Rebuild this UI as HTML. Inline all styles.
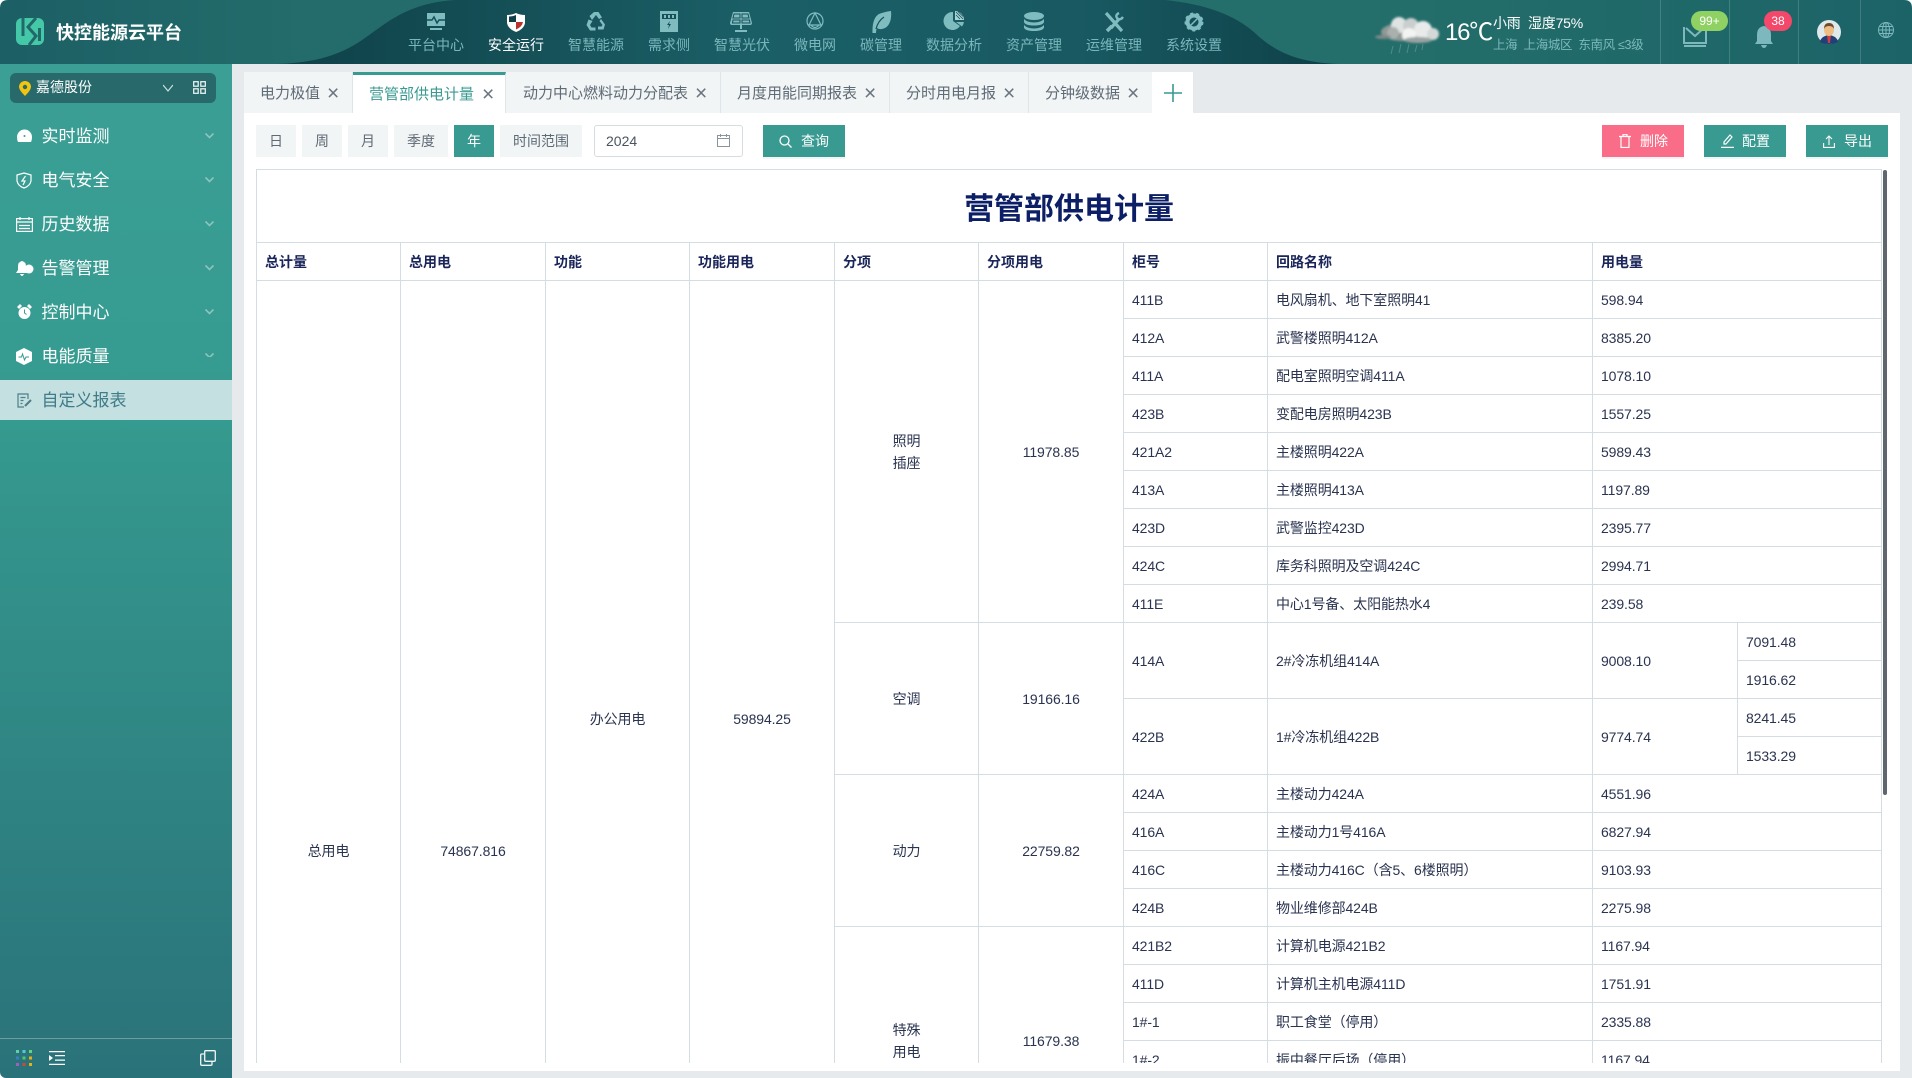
<!DOCTYPE html>
<html lang="zh-CN"><head><meta charset="utf-8"><title>快控能源云平台</title>
<style>
*{box-sizing:border-box}
html,body{margin:0;padding:0;width:1912px;height:1078px;overflow:hidden;background:#fff}
body{font-family:"Liberation Sans","Noto Sans CJK SC",sans-serif;position:relative;color:#2a3350}
.a{position:absolute;white-space:nowrap}
svg{position:absolute;display:block}
.nav{position:absolute;top:36px;width:80px;text-align:center;font-size:14px;line-height:18px;color:#79b7bc}
.m{position:absolute;left:41.500px;font-size:17px;line-height:24px;color:#fff}
.tab{position:absolute;top:72px;height:41px;background:#f2f5f6;border-right:1px solid #dfe5e8;font-size:15px;line-height:43px;color:#5f6b76;white-space:nowrap;padding-left:16px}
.tab i{position:absolute;top:0;width:12px;text-align:center;font-style:normal;font-size:21px;font-weight:400;color:#6b7680}
.btn{position:absolute;top:125px;height:32px;background:#f2f5f6;color:#5e6a75;font-size:14px;line-height:32px;text-align:center}
.act{position:absolute;top:125px;height:32px;width:82px;background:#389a90;color:#fff;font-size:14px;line-height:32px;box-shadow:0 2px 0 #f3f5f6}
.act span{position:absolute;left:38px;top:0}
table{border-collapse:collapse;table-layout:fixed;width:1625px;font-size:14px}
td,th{border:1px solid #d3dde2;padding:0 8px;height:38px;text-align:left;font-weight:400;color:#2a3350;white-space:nowrap;overflow:hidden;letter-spacing:-.1px}
th{font-weight:700;color:#1a2559;letter-spacing:0}
td.c{text-align:center;padding:0}
td.p{vertical-align:top;line-height:22px}
td.t{height:73px;font-size:30px;font-weight:700;color:#0c1f66;text-align:center;line-height:36px;padding-top:8px;letter-spacing:0}
</style></head><body>

<!-- header -->
<svg style="left:0;top:0" width="1912" height="64" viewBox="0 0 1912 64">
<defs>
<linearGradient id="h" x1="0" x2="1"><stop offset="0" stop-color="#1c5f65"/><stop offset=".16" stop-color="#236c6b"/><stop offset=".7" stop-color="#246f6b"/><stop offset="1" stop-color="#1c6367"/></linearGradient>
<linearGradient id="d" x1="0" x2="1"><stop offset="0" stop-color="#0f4048"/><stop offset=".45" stop-color="#1b5f66"/><stop offset=".75" stop-color="#195a62"/><stop offset="1" stop-color="#0e3f47"/></linearGradient>
</defs>
<path d="M8 0H1904Q1912 0 1912 8V64H0V8Q0 0 8 0Z" fill="url(#h)"/>
<path d="M270 64C320 64 345 52 365 38 390 20 410 3 455 0L1165 0C1205 4 1235 15 1255 33 1275 52 1300 64 1345 64Z" fill="url(#d)"/>
<!-- logo -->
<rect x="16" y="18" width="28" height="27" rx="6" fill="#45c8a8"/>
<path d="M23 18V36M36 18L28 27 36 36 29 45M39.500 28V41" fill="none" stroke="#21686a" stroke-width="3"/>
</svg>
<div class="a" style="left:56px;top:20px;font-size:18px;line-height:26px;font-weight:700;color:#fff">快控能源云平台</div>

<!-- nav icons -->
<svg style="left:425px;top:12px" width="22" height="20" viewBox="0 0 22 20"><path d="M2 1h18v13H2z" fill="#7fbcc0"/><path d="M2 8h5l2-3 3 6 2-3h6" fill="none" stroke="#164f57" stroke-width="1.500"/><path d="M5 16h12v2H5z" fill="#7fbcc0"/></svg>
<svg style="left:505px;top:12px" width="22" height="20" viewBox="0 0 22 20"><path d="M11 1q4 2 9 2v8q-1 6-9 9-8-3-9-9V3q5 0 9-2z" fill="#fff"/><path d="M11 3v7H4V4.500q4 0 7-1.500z" fill="#123f47"/><path d="M11 10h7q-1 5-7 7.500z" fill="#b9332e"/></svg>
<svg style="left:585px;top:11px" width="22" height="22" viewBox="0 0 22 22" fill="#7fbcc0"><path d="M7 9L4.500 5 9 1h4.500l3.500 5.500-3 1.500-3-4z"/><path d="M16 8l4 5.500-1.500 5h-5.500v-3h3.500l1-1.500-3-4z"/><path d="M10.500 19.500H5L1.500 14l2-5.500L7.500 10 5 14l1.500 2.500h4z"/></svg>
<svg style="left:659px;top:11px" width="20" height="22" viewBox="0 0 20 22"><rect x="1" y="0" width="18" height="21" fill="#7fbcc0"/><rect x="3" y="3" width="14" height="5" fill="#164f57"/><path d="M5 4h2v3H5zM9 4h2v3H9zM13 4h2v3h-2z" fill="#7fbcc0"/><path d="M11 10l-3 4h2l-1 4 3-5h-2z" fill="#164f57"/></svg>
<svg style="left:729px;top:11px" width="24" height="22" viewBox="0 0 24 22"><path d="M4 1h16l3 11q0 2-2 2H3q-2 0-2-2z" fill="#7fbcc0"/><path d="M5 3h6v4H4zM13 3h6l1 4h-7zM4 9h7v3H3.500zM13 9h7.500l.500 3h-8z" fill="#7fbcc0" stroke="#164f57" stroke-width="1"/><path d="M11 14h2v4h-2zM6 19h12v2H6z" fill="#7fbcc0"/></svg>
<svg style="left:805px;top:11px" width="20" height="20" viewBox="0 0 20 20" fill="none" stroke="#7fbcc0" stroke-width="1.200"><circle cx="10" cy="10" r="8"/><path d="M10 2L4 14h12zM6 14q4 5 8 0"/></svg>
<svg style="left:870px;top:11px" width="22" height="22" viewBox="0 0 22 22"><path d="M21 0C22 9 19 17 12 18Q9 18.500 7 17 6 19 6 22H2.500Q2 7 9 3 14 1 21 0Z" fill="#7fbcc0"/><path d="M6 18Q8 10 14 6" fill="none" stroke="#164f57" stroke-width="1.200"/></svg>
<svg style="left:943px;top:10px" width="22" height="22" viewBox="0 0 22 22"><path d="M10 2v9l7 5a9 9 0 1 1-7-14z" fill="#7fbcc0"/><path d="M12 1a9 9 0 0 1 9 9h-9z" fill="#a9d4d6"/><path d="M13 2l7 7M15 1.500l5 5M13 5l4 4" stroke="#164f57" stroke-width=".8"/><path d="M13 12h8q-.5 2.500-2 4.500z" fill="#7fbcc0"/></svg>
<svg style="left:1023px;top:12px" width="22" height="20" viewBox="0 0 22 20" fill="#7fbcc0"><ellipse cx="11" cy="4" rx="10" ry="4"/><path d="M1 7q3 3.500 10 3.500T21 7v3q-1 3.500-10 3.500T1 10z"/><path d="M1 13q3 3.500 10 3.500T21 13v2.500Q20 19 11 19T1 15.500z"/></svg>
<svg style="left:1103px;top:11px" width="22" height="22" viewBox="0 0 22 22" fill="none" stroke="#7fbcc0" stroke-width="3.200"><path d="M3 2l16 18"/><path d="M8 17l8-9" /><path d="M4 20l5-5" stroke-width="3.600"/><path d="M16 2q-4 2-2 5 3 3 6-1" stroke-width="2.400"/></svg>
<svg style="left:1184px;top:12px" width="20" height="20" viewBox="0 0 20 20"><circle cx="10" cy="10" r="6.500" fill="none" stroke="#7fbcc0" stroke-width="4"/><circle cx="10" cy="10" r="8.500" fill="none" stroke="#7fbcc0" stroke-width="2" stroke-dasharray="3 3"/><path d="M7 13l6-6" stroke="#7fbcc0" stroke-width="1.500"/></svg>

<div class="nav" style="left:396px">平台中心</div>
<div class="nav" style="left:476px;color:#fff">安全运行</div>
<div class="nav" style="left:556px">智慧能源</div>
<div class="nav" style="left:629px">需求侧</div>
<div class="nav" style="left:702px">智慧光伏</div>
<div class="nav" style="left:775px">微电网</div>
<div class="nav" style="left:841px">碳管理</div>
<div class="nav" style="left:914px">数据分析</div>
<div class="nav" style="left:994px">资产管理</div>
<div class="nav" style="left:1074px">运维管理</div>
<div class="nav" style="left:1154px">系统设置</div>

<!-- weather -->
<svg style="left:1373px;top:14px" width="74" height="42" viewBox="0 0 74 42">
<defs><filter id="b"><feGaussianBlur stdDeviation="1"/></filter></defs>
<g filter="url(#b)"><ellipse cx="30" cy="18" rx="22" ry="9" fill="#8f9896"/><circle cx="26" cy="11" r="8" fill="#dfe3e2"/><circle cx="38" cy="12" r="8" fill="#c9cfce"/><circle cx="50" cy="16" r="9" fill="#e8ebea"/><circle cx="60" cy="20" r="6" fill="#d4d9d8"/><circle cx="36" cy="21" r="7" fill="#f2f4f3"/><circle cx="20" cy="19" r="6" fill="#a9b0ae"/><ellipse cx="10" cy="23" rx="8" ry="2" fill="#7f8a88"/><ellipse cx="45" cy="26" rx="14" ry="3" fill="#9aa3a1"/></g>
<path d="M20 32l-2 8M28 30l-2 9M36 30l-2 9M44 31l-2 7M50 30l-1 6" stroke="#4f8a8d" stroke-width="1"/>
</svg>
<div class="a" style="left:1445px;top:18px;font-size:24px;line-height:30px;color:#fff;letter-spacing:-1.200px">16℃</div>
<div class="a" style="left:1493px;top:14px;font-size:14px;line-height:18px;color:#fff;letter-spacing:-.2px">小雨&nbsp;&nbsp;湿度75%</div>
<div class="a" style="left:1493px;top:36px;font-size:12.500px;line-height:18px;color:#7cb8bd;letter-spacing:-.35px">上海&nbsp;&nbsp;上海城区&nbsp;&nbsp;东南风&nbsp;≤3级</div>

<div class="a" style="left:1660px;top:0;width:1px;height:64px;background:rgba(255,255,255,.16)"></div>
<div class="a" style="left:1729px;top:0;width:1px;height:64px;background:rgba(255,255,255,.16)"></div>
<div class="a" style="left:1798px;top:0;width:1px;height:64px;background:rgba(255,255,255,.16)"></div>
<div class="a" style="left:1860px;top:0;width:1px;height:64px;background:rgba(255,255,255,.16)"></div>

<svg style="left:1683px;top:25px" width="24" height="22" viewBox="0 0 24 22" fill="none" stroke="#7cb8bd" stroke-width="2"><path d="M1 2v16h22V2"/><path d="M1 21h22" /><path d="M3 3l9 8 9-8"/></svg>
<div class="a" style="left:1691px;top:11px;width:37px;height:20px;border-radius:10px;background:#8fd163;color:#fff;font-size:12px;line-height:20px;text-align:center">99+</div>
<svg style="left:1754px;top:26px" width="20" height="22" viewBox="0 0 20 22" fill="#7cb8bd"><path d="M10 0q7 1 7 9v6l2 3H1l2-3V9q0-8 7-9z"/><path d="M7 19h6q-1 3-3 3t-3-3z"/></svg>
<div class="a" style="left:1764px;top:11px;width:28px;height:20px;border-radius:10px;background:#f4486b;color:#fff;font-size:12px;line-height:20px;text-align:center">38</div>
<svg style="left:1817px;top:20px" width="24" height="24" viewBox="0 0 24 24"><circle cx="12" cy="12" r="12" fill="#dfe8ea"/><path d="M3 22q1-6 9-7 8 1 9 7-4 2-9 2t-9-2z" fill="#213f78"/><path d="M10 15h4l-1 8h-2z" fill="#d63a3a"/><ellipse cx="12" cy="10" rx="5" ry="6" fill="#eebd84"/><path d="M7 9q0-6 5-6t5 6q-1-3-5-3t-5 3z" fill="#6e4a2e"/></svg>
<svg style="left:1878px;top:22px" width="16" height="16" viewBox="0 0 16 16" fill="none" stroke="#7cb8bd" stroke-width="1"><circle cx="8" cy="8" r="7.500"/><ellipse cx="8" cy="8" rx="3.500" ry="7.500"/><path d="M8 0v16M.5 8h15M1.500 4.500h13M1.500 11.500h13"/></svg>

<!-- sidebar -->
<div class="a" style="left:0;top:64px;width:232px;height:1014px;background:linear-gradient(#3b9f95,#359a8f 35%,#2a7279);border-bottom-left-radius:6px"></div>
<div class="a" style="left:10px;top:73px;width:206px;height:30px;background:#28696b;border-radius:6px"></div>
<svg style="left:19px;top:81px" width="12" height="15" viewBox="0 0 12 15"><path d="M6 0a6 6 0 0 1 6 6q0 3-6 9Q0 9 0 6a6 6 0 0 1 6-6z" fill="#f1c40f"/><circle cx="6" cy="6" r="2.200" fill="#28696b"/></svg>
<div class="a" style="left:36px;top:77px;font-size:14px;line-height:20px;color:#fff">嘉德股份</div>
<svg style="left:163px;top:84px" width="10" height="8" viewBox="0 0 10 8" fill="none" stroke="#cfe3e2" stroke-width="1.200"><path d="M0 1l5 6 5-6"/></svg>
<svg style="left:193px;top:81px" width="13" height="13" viewBox="0 0 13 13" fill="none" stroke="#e6f0f0" stroke-width="1.300"><rect x=".7" y=".7" width="4.500" height="4.500"/><rect x="7.800" y=".7" width="4.500" height="4.500"/><rect x=".7" y="7.800" width="4.500" height="4.500"/><rect x="7.800" y="7.800" width="4.500" height="4.500"/></svg>

<svg style="left:17px;top:129px" width="15" height="15" viewBox="0 0 15 15"><path d="M1 13q-1-2-1-5a7.500 7.500 0 0 1 15 0q0 3-1 5z" fill="#fff"/><circle cx="7.500" cy="7" r="1" fill="#3a9e94"/></svg>
<svg style="left:16px;top:172px" width="16" height="17" viewBox="0 0 16 17" fill="none" stroke="#fff" stroke-width="1.200"><path d="M8 1l7 2v6q-1 5-7 7-6-2-7-7V3z"/><path d="M9.500 4L6 9h3l-2 4" /></svg>
<svg style="left:16px;top:217px" width="17" height="15" viewBox="0 0 17 15" fill="none" stroke="#fff" stroke-width="1.200"><rect x=".6" y="1.600" width="15.800" height="12.800"/><path d="M.6 5h15.800M4 0v3M13 0v3M3 8.500h11M3 11.500h11" /></svg>
<svg style="left:15px;top:260px" width="19" height="17" viewBox="0 0 19 17" fill="#fff"><path d="M7 1q4 1 4 5v4l1 3H1l2-3V6q0-4 4-5z"/><path d="M5 14h4q-1 2-2 2t-2-2z"/><circle cx="14" cy="9" r="4.500"/></svg>
<svg style="left:17px;top:304px" width="15" height="16" viewBox="0 0 15 16"><circle cx="7.500" cy="9" r="6" fill="#fff"/><path d="M0 3l3-3 2 2-3 3zM15 3l-3-3-2 2 3 3z" fill="#fff"/><path d="M7.500 5.500V9l2 1.500" stroke="#3a9e94" fill="none"/></svg>
<svg style="left:16px;top:348px" width="16" height="17" viewBox="0 0 16 17"><path d="M8 0l8 4v9l-8 4-8-4V4z" fill="#fff"/><path d="M2.500 9h3l1-3 2 6 1.500-3h3" stroke="#359a8f" stroke-width="1" fill="none"/></svg>

<div class="m" style="top:125px">实时监测</div>
<div class="m" style="top:169px">电气安全</div>
<div class="m" style="top:213px">历史数据</div>
<div class="m" style="top:257px">告警管理</div>
<div class="m" style="top:301px">控制中心</div>
<div class="m" style="top:345px">电能质量</div>
<svg style="left:205px;top:133px" width="9" height="224" viewBox="0 0 9 224" fill="none" stroke="#8cc4bf" stroke-width="1.600"><path d="M.500 .500l4 4 4-4M.500 44.500l4 4 4-4M.500 88.500l4 4 4-4M.500 132.500l4 4 4-4M.500 176.500l4 4 4-4M.500 220.500l4 4 4-4"/></svg>

<div class="a" style="left:0;top:380px;width:232px;height:40px;background:#c5e0e0"></div>
<svg style="left:17px;top:393px" width="15" height="15" viewBox="0 0 15 15" fill="none" stroke="#4d7e8a" stroke-width="1.200"><path d="M11 6V1H1v13h6M3.500 4.500h5M3.500 7.500h3M3.500 10.500h2"/><path d="M8 13l6-6" stroke-width="2"/></svg>
<div class="m" style="top:389px;color:#3f7b88">自定义报表</div>

<div class="a" style="left:0;top:1038px;width:232px;height:1px;background:rgba(255,255,255,.3)"></div>
<svg style="left:16px;top:1050px" width="17" height="16" viewBox="0 0 17 16"><rect x="0" y="0" width="3" height="3" fill="#5fd0a8"/><rect x="6.500" y="0" width="3" height="3" fill="#55c7e0"/><rect x="13" y="0" width="3" height="3" fill="#6ed07a"/><rect x="0" y="6.500" width="3" height="3" fill="#3a7fbf"/><rect x="6.500" y="6.500" width="3" height="3" fill="#55c56a"/><rect x="13" y="6.500" width="3" height="3" fill="#e8b010"/><rect x="0" y="13" width="3" height="3" fill="#9a62b8"/><rect x="6.500" y="13" width="3" height="3" fill="#d8433a"/><rect x="13" y="13" width="3" height="3" fill="#e8b010"/></svg>
<svg style="left:49px;top:1051px" width="16" height="14" viewBox="0 0 16 14" fill="#fff"><path d="M0 0h16v1.300H0zM6 4h10v1.300H6zM6 8.500h10v1.300H6zM0 12.700h16V14H0zM0 4l4 3-4 3z"/></svg>
<svg style="left:200px;top:1050px" width="16" height="16" viewBox="0 0 16 16" fill="none" stroke="#f0f5f5" stroke-width="1.300"><rect x="4.700" y=".7" width="10.600" height="10.600" rx="1"/><path d="M4 4H1.500Q.7 4 .7 5v9.300q0 1 1 1H11q1 0 1-1V12"/></svg>

<!-- main -->
<div class="a" style="left:232px;top:64px;width:1680px;height:1014px;background:#e6eaed"></div>
<div class="a" style="left:244px;top:113px;width:1656px;height:958px;background:#fff"></div>

<div class="tab" style="left:244px;width:109px">电力极值<i style="left:83px">×</i></div>
<div class="tab" style="left:353px;width:153px;background:#fff;color:#389a90;border-top:3px solid #389a90;line-height:40px">营管部供电计量<i style="left:129px">×</i></div>
<div class="tab" style="left:506px;width:215px;padding-left:17px">动力中心燃料动力分配表<i style="left:189px">×</i></div>
<div class="tab" style="left:721px;width:169px">月度用能同期报表<i style="left:143px">×</i></div>
<div class="tab" style="left:890px;width:139px">分时用电月报<i style="left:113px">×</i></div>
<div class="tab" style="left:1029px;width:123px;border-right:0">分钟级数据<i style="left:98px">×</i></div>
<div class="a" style="left:1152px;top:72px;width:41px;height:41px;background:#fff"></div>
<svg style="left:1164px;top:84px" width="18" height="18" viewBox="0 0 18 18"><path d="M9 0v18M0 9h18" stroke="#389a90" stroke-width="1.600"/></svg>

<div class="btn" style="left:256px;width:40px">日</div>
<div class="btn" style="left:302px;width:40px">周</div>
<div class="btn" style="left:348px;width:40px">月</div>
<div class="btn" style="left:394px;width:54px">季度</div>
<div class="btn" style="left:454px;width:40px;background:#389a90;color:#fff">年</div>
<div class="btn" style="left:500px;width:82px">时间范围</div>
<div class="a" style="left:594px;top:125px;width:149px;height:32px;border:1px solid #d5dde0;border-radius:3px;font-size:14px;line-height:30px;padding-left:11px;color:#4a5560">2024</div>
<svg style="left:717px;top:134px" width="13" height="13" viewBox="0 0 13 13" fill="none" stroke="#8a949c" stroke-width="1"><rect x=".5" y="1.500" width="12" height="11"/><path d="M.5 4.500h12M3.500 0v3M9.500 0v3"/></svg>

<div class="act" style="left:763px"><span>查询</span></div>
<svg style="left:779px;top:135px" width="13" height="13" viewBox="0 0 13 13" fill="none" stroke="#fff" stroke-width="1.300"><circle cx="5.500" cy="5.500" r="4.500"/><path d="M9 9l3.500 3.500"/></svg>
<div class="act" style="left:1602px;background:#f96d88"><span>删除</span></div>
<svg style="left:1619px;top:134px" width="12" height="14" viewBox="0 0 12 14" fill="none" stroke="#fff" stroke-width="1.200"><path d="M0 2.500h12M4 2.500V.7h4v1.800M2 2.500v11h8v-11"/></svg>
<div class="act" style="left:1704px"><span>配置</span></div>
<svg style="left:1721px;top:134px" width="13" height="14" viewBox="0 0 13 14" fill="none" stroke="#fff" stroke-width="1.200"><path d="M0 13.400h13M3 10V8l6-7 2 2-6 7z"/></svg>
<div class="act" style="left:1806px"><span>导出</span></div>
<svg style="left:1823px;top:135px" width="12" height="13" viewBox="0 0 12 13" fill="none" stroke="#fff" stroke-width="1.100"><path d="M.6 8v4.400h10.800V8M6 10V1M3 4l3-3 3 3"/></svg>

<!-- table -->
<div class="a" style="left:256px;top:169px;width:1626px;height:894px;overflow:hidden">
<table>
<colgroup><col style="width:144px"><col style="width:145px"><col style="width:144px"><col style="width:145px"><col style="width:144px"><col style="width:145px"><col style="width:144px"><col style="width:325px"><col style="width:145px"><col style="width:144px"></colgroup>
<tr><td class="t" colspan="10">营管部供电计量</td></tr>
<tr><th>总计量</th><th>总用电</th><th>功能</th><th>功能用电</th><th>分项</th><th>分项用电</th><th>柜号</th><th>回路名称</th><th colspan="2">用电量</th></tr>
<tr><td class="c p" rowspan="21" style="padding-top:559px">总用电</td><td class="c p" rowspan="21" style="padding-top:559px">74867.816</td><td class="c p" rowspan="21" style="padding-top:427px;border-bottom:0">办公用电</td><td class="c p" rowspan="21" style="padding-top:427px;border-bottom:0">59894.25</td><td class="c" rowspan="9" style="line-height:22px">照明<br>插座</td><td class="c" rowspan="9">11978.85</td><td>411B</td><td>电风扇机、地下室照明41</td><td colspan="2">598.94</td></tr>
<tr><td>412A</td><td>武警楼照明412A</td><td colspan="2">8385.20</td></tr>
<tr><td>411A</td><td>配电室照明空调411A</td><td colspan="2">1078.10</td></tr>
<tr><td>423B</td><td>变配电房照明423B</td><td colspan="2">1557.25</td></tr>
<tr><td>421A2</td><td>主楼照明422A</td><td colspan="2">5989.43</td></tr>
<tr><td>413A</td><td>主楼照明413A</td><td colspan="2">1197.89</td></tr>
<tr><td>423D</td><td>武警监控423D</td><td colspan="2">2395.77</td></tr>
<tr><td>424C</td><td>库务科照明及空调424C</td><td colspan="2">2994.71</td></tr>
<tr><td>411E</td><td>中心1号备、太阳能热水4</td><td colspan="2">239.58</td></tr>
<tr><td class="c" rowspan="4">空调</td><td class="c" rowspan="4">19166.16</td><td rowspan="2">414A</td><td rowspan="2">2#冷冻机组414A</td><td rowspan="2">9008.10</td><td>7091.48</td></tr>
<tr><td>1916.62</td></tr>
<tr><td rowspan="2">422B</td><td rowspan="2">1#冷冻机组422B</td><td rowspan="2">9774.74</td><td>8241.45</td></tr>
<tr><td>1533.29</td></tr>
<tr><td class="c" rowspan="4">动力</td><td class="c" rowspan="4">22759.82</td><td>424A</td><td>主楼动力424A</td><td colspan="2">4551.96</td></tr>
<tr><td>416A</td><td>主楼动力1号416A</td><td colspan="2">6827.94</td></tr>
<tr><td>416C</td><td>主楼动力416C（含5、6楼照明）</td><td colspan="2">9103.93</td></tr>
<tr><td>424B</td><td>物业维修部424B</td><td colspan="2">2275.98</td></tr>
<tr><td class="c p" rowspan="4" style="padding-top:92px">特殊<br>用电</td><td class="c p" rowspan="4" style="padding-top:103px">11679.38</td><td>421B2</td><td>计算机电源421B2</td><td colspan="2">1167.94</td></tr>
<tr><td>411D</td><td>计算机主机电源411D</td><td colspan="2">1751.91</td></tr>
<tr><td>1#-1</td><td>职工食堂（停用）</td><td colspan="2">2335.88</td></tr>
<tr><td style="height:37px">1#-2</td><td>振中餐厅后场（停用）</td><td colspan="2">1167.94</td></tr>
</table>
</div>
<div class="a" style="left:1883px;top:170px;width:4px;height:625px;background:#5e6670;border-radius:2px"></div>
</body></html>
